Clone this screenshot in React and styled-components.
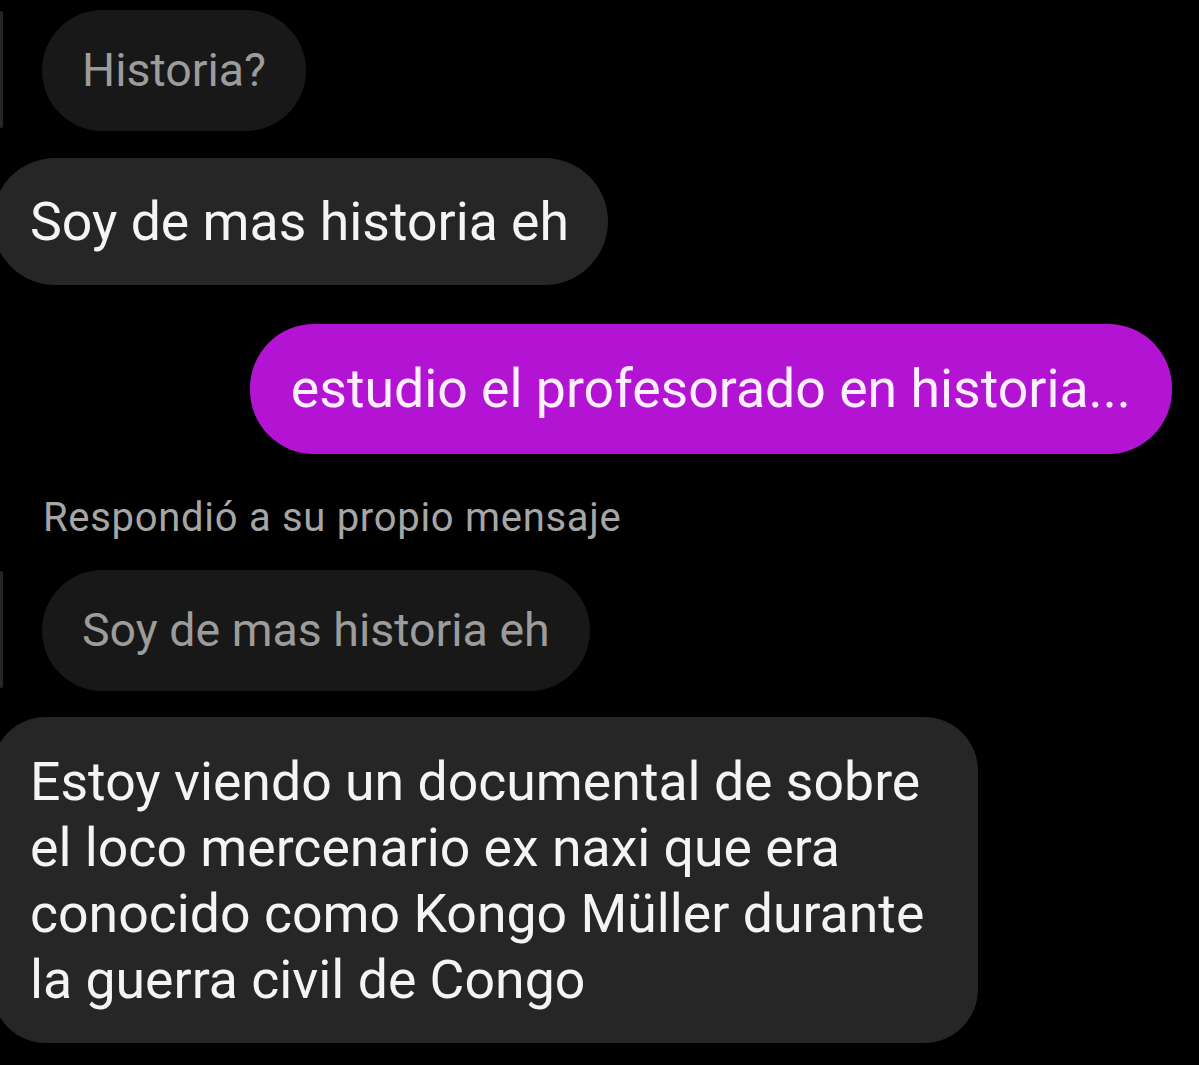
import React from "react";
import styled, { createGlobalStyle } from "styled-components";

const GlobalStyle = createGlobalStyle`
  html, body {
    margin: 0;
    padding: 0;
    background: #000;
  }
  body {
    font-family: Roboto, "Noto Sans", "Liberation Sans", sans-serif;
    -webkit-font-smoothing: antialiased;
  }
`;

const Thread = styled.div`
  width: 1199px;
  height: 1065px;
  overflow: hidden;
  background: #000;
  display: flex;
  flex-direction: column;
  padding-top: 10px;
  box-sizing: border-box;
`;

const Row = styled.div`
  display: flex;
  justify-content: ${({ $mine }) => ($mine ? "flex-end" : "flex-start")};
  margin-top: ${({ $gap = 0 }) => $gap}px;
  padding-right: ${({ $mine }) => ($mine ? 27 : 0)}px;
`;

const QuoteRow = styled.div`
  display: flex;
  align-items: stretch;
  gap: 39px;
  margin-top: ${({ $gap = 0 }) => $gap}px;
`;

const QuoteBar = styled.div`
  width: 4px;
  margin-left: -1px;
  margin-block: 1px 3px;
  border-radius: 2px;
  background: #262626;
`;

const QuoteBubble = styled.div`
  background: #181818;
  color: #9c9c9c;
  font-size: 46.5px;
  line-height: 121px;
  padding: 0 40px;
  border-radius: 61px;
  white-space: nowrap;
`;

const Bubble = styled.div`
  font-size: 53.6px;
  line-height: 66px;
  white-space: nowrap;
  box-sizing: border-box;
  border-radius: ${({ $multi }) => ($multi ? 54 : 64)}px;
  background: ${({ $mine }) => ($mine ? "#b313d3" : "#262626")};
  color: ${({ $mine }) => ($mine ? "#fcf0ff" : "#f4f4f4")};
  padding: ${({ $mine, $multi }) =>
    $multi ? "32px 40px 30px 38px" : $mine ? "32px 41px 32px 41px" : "31px 39px 30px 38px"};
  margin-left: ${({ $mine }) => ($mine ? 0 : -8)}px;
  width: ${({ $multi }) => ($multi ? "986px" : "auto")};
`;

const Line = styled.span`
  display: block;
`;

const Label = styled.div`
  color: #a6a6a6;
  font-size: 40px;
  line-height: 48px;
  letter-spacing: 0.7px;
  padding-left: 43px;
  margin-top: 40px;
`;

const longText = [
  "Estoy viendo un documental de sobre",
  "el loco mercenario ex naxi que era",
  "conocido como Kongo Müller durante",
  "la guerra civil de Congo",
];

export default function App() {
  return (
    <>
      <GlobalStyle />
      <Thread>
        <QuoteRow>
          <QuoteBar />
          <QuoteBubble>Historia?</QuoteBubble>
        </QuoteRow>
        <Row $gap={27}>
          <Bubble>Soy de mas historia eh</Bubble>
        </Row>
        <Row $mine $gap={39}>
          <Bubble $mine>estudio el profesorado en historia...</Bubble>
        </Row>
        <Label>Respondió a su propio mensaje</Label>
        <QuoteRow $gap={28}>
          <QuoteBar />
          <QuoteBubble>Soy de mas historia eh</QuoteBubble>
        </QuoteRow>
        <Row $gap={26}>
          <Bubble $multi>
            {longText.map((line) => (
              <Line key={line}>{line}</Line>
            ))}
          </Bubble>
        </Row>
      </Thread>
    </>
  );
}
